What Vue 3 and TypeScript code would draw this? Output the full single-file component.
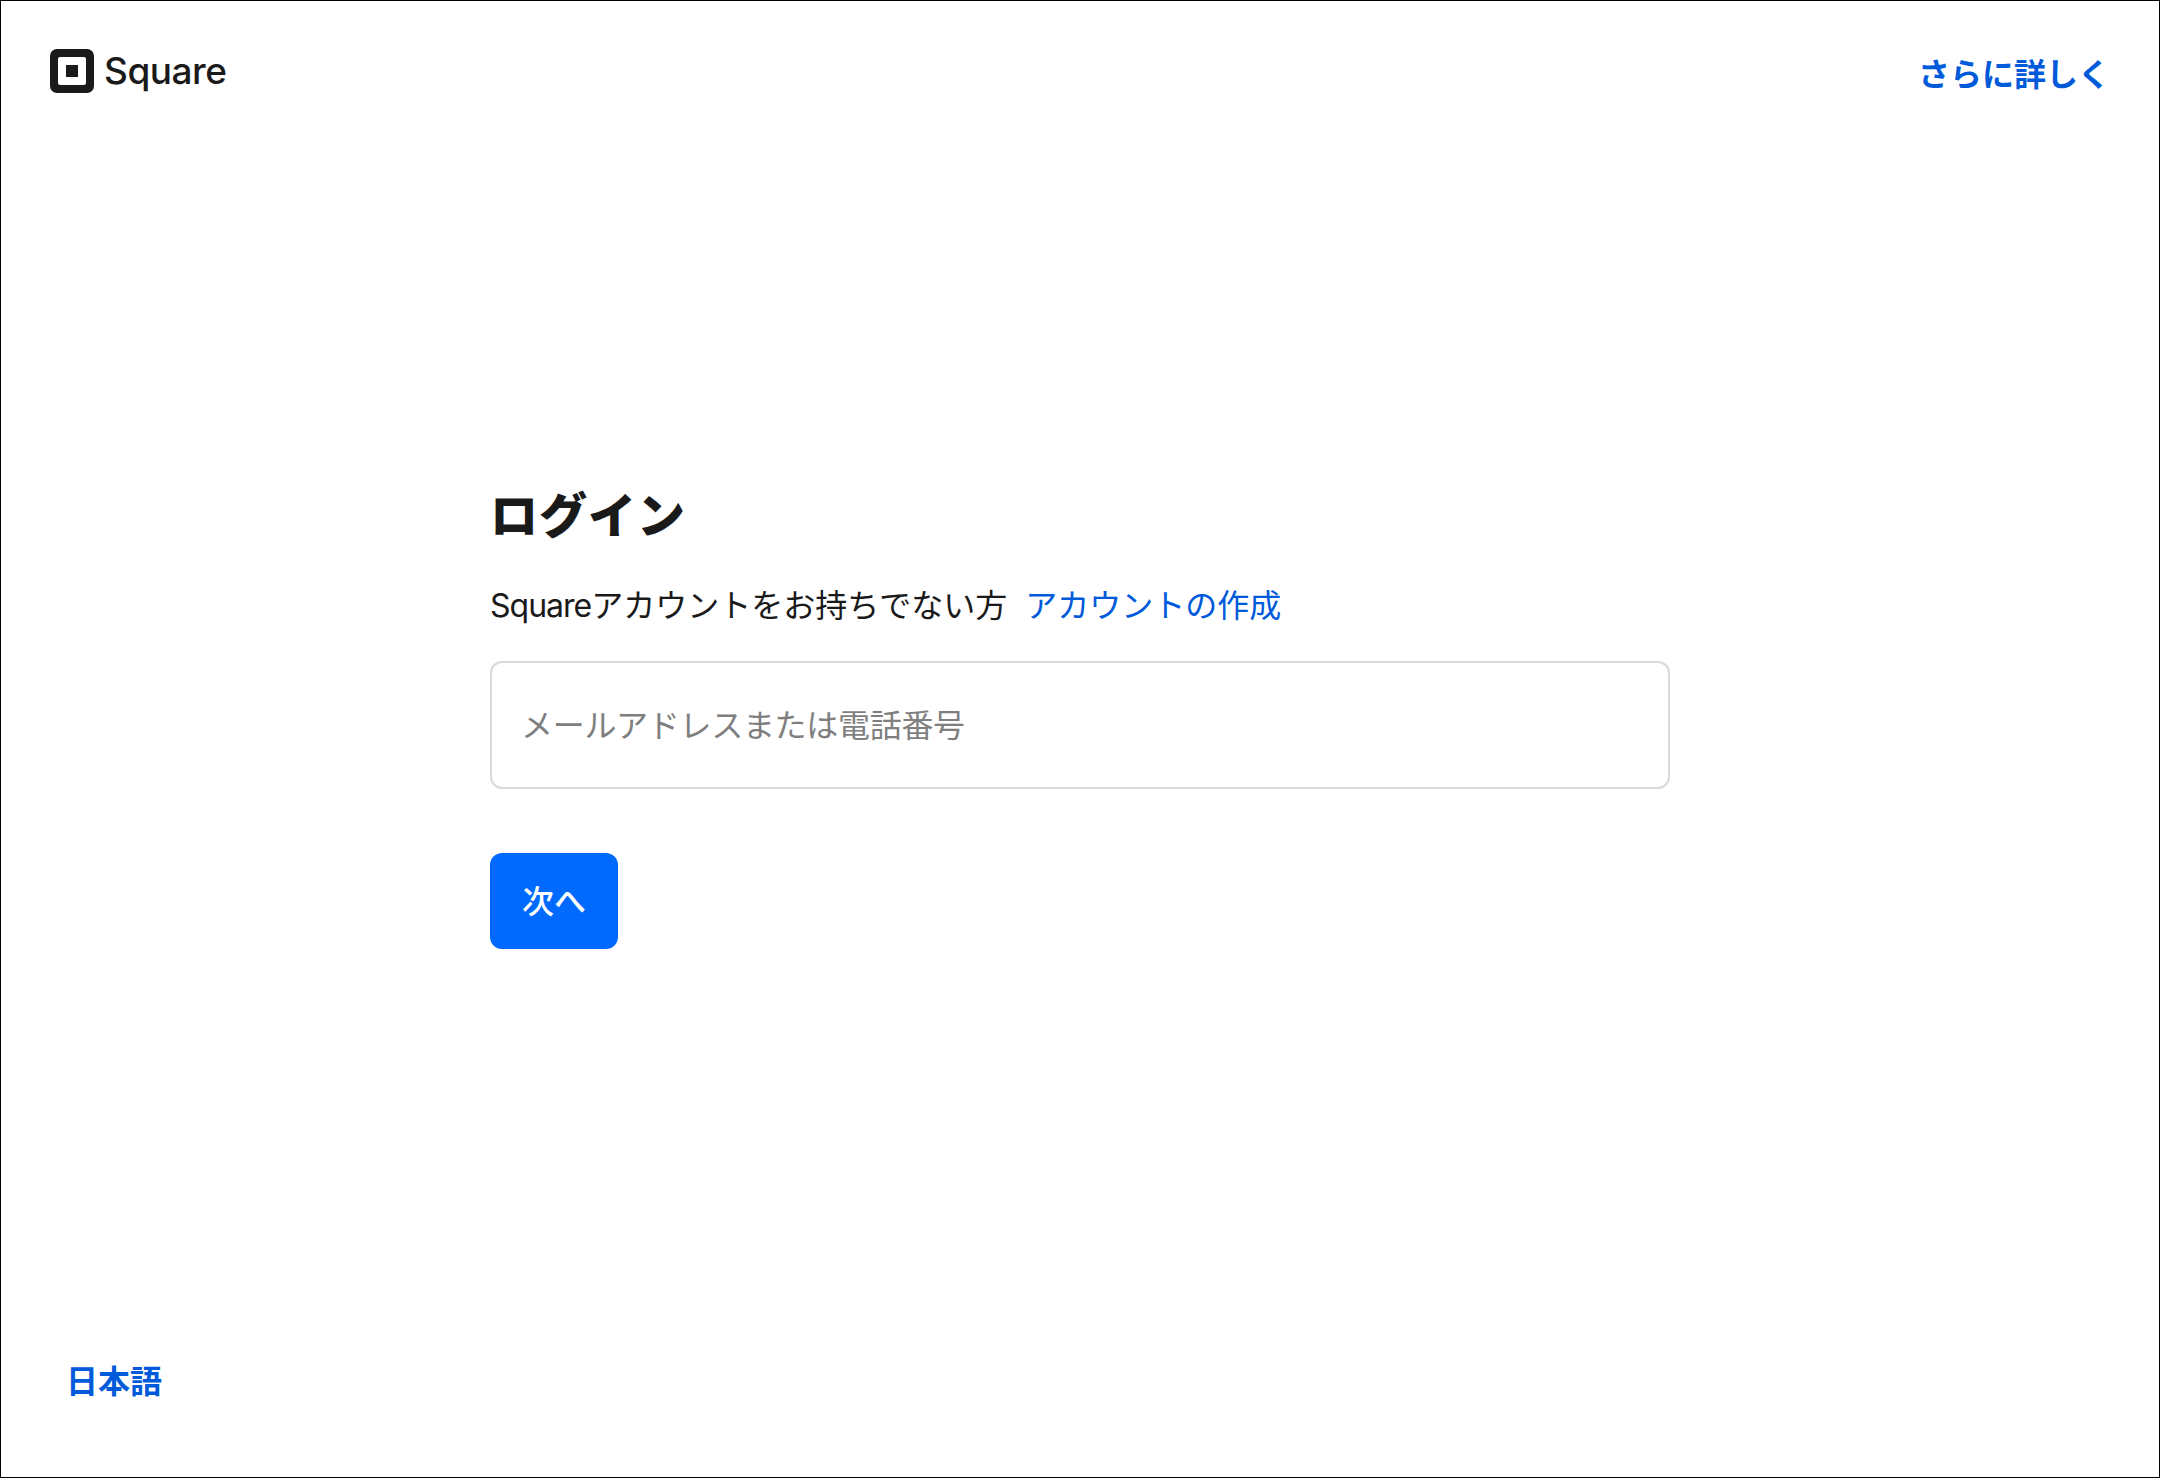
<template>
  <div class="page">
    <header class="top-bar">
      <a class="logo" href="#">
        <svg class="logo-mark" viewBox="0 0 44 44" aria-hidden="true">
          <path
            fill-rule="evenodd"
            d="M7 0h30a7 7 0 0 1 7 7v30a7 7 0 0 1-7 7H7a7 7 0 0 1-7-7V7a7 7 0 0 1 7-7zM10 8a2 2 0 0 0-2 2v24a2 2 0 0 0 2 2h24a2 2 0 0 0 2-2V10a2 2 0 0 0-2-2zM16 16h12v12H16z"
          />
        </svg>
        <span class="logo-text">Square</span>
      </a>
      <a class="strong-link learn-more" href="#">さらに詳しく</a>
    </header>

    <main class="login">
      <h1>ログイン</h1>
      <p class="signup">
        <span><span class="brand">Square</span>アカウントをお持ちでない方</span>
        <a href="#">アカウントの作成</a>
      </p>
      <input v-model="account" class="account-input" type="text" placeholder="メールアドレスまたは電話番号" />
      <button class="next-button" type="button">次へ</button>
    </main>

    <footer class="bottom-bar">
      <a class="strong-link" href="#">日本語</a>
    </footer>
  </div>
</template>

<script setup lang="ts">
import { ref } from 'vue'

const account = ref<string>('')
</script>

<style scoped>
.page {
  width: 2160px;
  height: 1478px;
  box-sizing: border-box;
  border: 1px solid #000000;
  background-color: #ffffff;
  color: #1a1a1a;
  font-family: Inter, "Noto Sans CJK JP", sans-serif;
  display: flex;
  flex-direction: column;
  overflow: hidden;
}

a {
  text-decoration: none;
}

.top-bar {
  display: flex;
  justify-content: space-between;
  align-items: flex-start;
  padding: 48px 49px 0 49px;
  height: 44px;
}

.logo {
  display: flex;
  align-items: center;
  gap: 10px;
  color: #1a1a1a;
}

.logo-mark {
  width: 44px;
  height: 44px;
  fill: #1a1a1a;
}

.logo-text {
  font-size: 37px;
  font-weight: 500;
  letter-spacing: -0.5px;
  line-height: 44px;
}

.strong-link {
  color: #005ad9;
  font-size: 32px;
  font-weight: 700;
  line-height: 44px;
}

.learn-more {
  margin-top: 4px;
}

.login {
  width: 1180px;
  margin: 393px auto 0;
  display: flex;
  flex-direction: column;
  align-items: flex-start;
}

h1 {
  margin: 0;
  font-size: 48px;
  font-weight: 900;
  letter-spacing: 1px;
  line-height: 60px;
}

.signup {
  margin: 38px 0 0;
  font-size: 32px;
  line-height: 44px;
  display: flex;
  gap: 18px;
}

.brand {
  letter-spacing: -1px;
}

.signup a {
  color: #005ad9;
}

.account-input {
  width: 100%;
  height: 128px;
  margin-top: 33px;
  padding: 0 29px;
  box-sizing: border-box;
  border: 2px solid #d9d9d9;
  border-radius: 12px;
  outline: none;
  font-family: inherit;
  font-size: 32px;
  letter-spacing: -0.3px;
  color: #1a1a1a;
}

.account-input::placeholder {
  color: #7f7f7f;
  opacity: 1;
}

.next-button {
  margin-top: 64px;
  width: 128px;
  height: 96px;
  padding: 0 0 4px;
  border: none;
  border-radius: 12px;
  background-color: #006aff;
  color: #ffffff;
  font-family: inherit;
  font-size: 32px;
  font-weight: 500;
  cursor: pointer;
}

.bottom-bar {
  margin-top: auto;
  padding: 0 0 73px 65px;
}
</style>
